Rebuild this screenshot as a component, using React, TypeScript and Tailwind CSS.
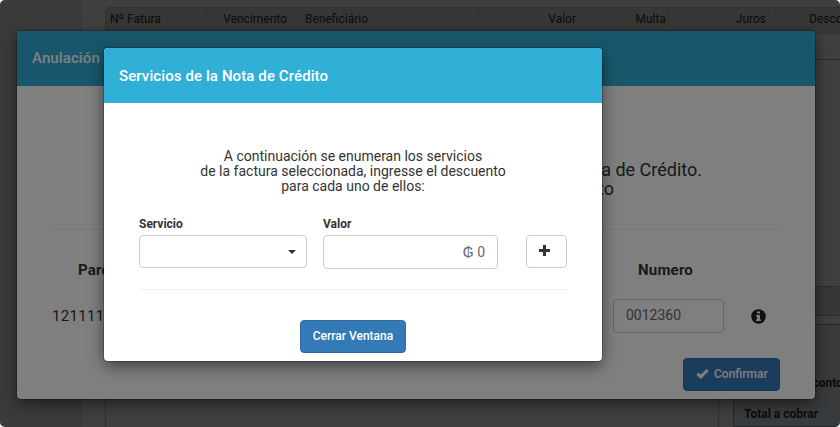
import React from "react";

const columns = [
  { label: "Nº Fatura", cls: "w-[101px] pl-1" },
  { label: "Vencimento", cls: "w-[95px] text-right pr-[14px]" },
  { label: "Beneficiário", cls: "w-[177px] pl-[3px]" },
  { label: "Valor", cls: "w-[100px] text-right pr-[2px]" },
  { label: "Multa", cls: "w-[90px] text-right pr-[2px]" },
  { label: "Juros", cls: "w-[100px] text-right pr-[2px]" },
  { label: "Desconto", cls: "w-[100px] pl-10" },
];

function BillingPage() {
  return (
    <div className="flex h-full w-full bg-white text-[#333]">
      <aside className="w-[81px] shrink-0 border-r border-[#e0e0e0] bg-[#ececec]" />
      <main className="flex min-w-0 grow flex-col pl-6 pt-[7px]">
        <div className="flex h-[27px] w-[763px] shrink-0 rounded-tl border border-[#c8c8c8] bg-[#dcdcdc]">
          {columns.map((c) => (
            <div
              key={c.label}
              className={`h-full shrink-0 border-r border-[#cacaca] text-[12px] leading-[22px] ${c.cls}`}
            >
              {c.label}
            </div>
          ))}
        </div>
        <div className="h-[26px] shrink-0 border-b border-[#b4b4b4]" />
        <div className="flex min-h-0 grow">
          <div className="w-[614px] shrink-0 border-x border-[#c0c0c0]" />
          <div className="ml-[14px] flex w-[160px] shrink-0 flex-col pt-[226px]">
            <div className="h-[30px] shrink-0 border border-[#b4b4b4] bg-[#dcdcdc]" />
            <div className="mt-[8px] grow border border-[#98a4b0] bg-[#e6eaf0] pl-[10px] pt-[50px] text-[12px] font-bold leading-4">
              <div className="pl-[48px]">Desconto</div>
              <div className="mt-[15px]">Total a cobrar</div>
            </div>
          </div>
        </div>
      </main>
    </div>
  );
}

function CancelDialog() {
  return (
    <section className="absolute left-[17px] top-[31px] flex h-[368px] w-[798px] flex-col overflow-hidden rounded bg-white text-[#333] shadow-[0_0_0_1px_rgba(0,0,0,0.2),0_5px_15px_rgba(0,0,0,0.5)]">
      <header className="h-[55px] shrink-0 bg-[#30afd7] pl-[15px] text-[15px] font-medium leading-[55px] tracking-[0.1px] text-white">
        Anulación de Factura
      </header>
      <div className="flex grow flex-col px-[35px]">
        <div className="h-[144px] shrink-0 border-b border-[#eee] pr-[78px] pt-[74px] text-[18px] leading-[19px]">
          <p className="text-right">Seleccione la Nota de Crédito.</p>
          <p className="pr-[88px] text-right">e ingrese el descuento</p>
        </div>
        <div className="flex grow justify-between">
          <div className="pt-[30px]">
            <div className="pl-[26px] text-[15px] font-bold leading-5 tracking-[0.2px]">Parcela</div>
            <div className="mt-[26px] text-[15px] leading-5 tracking-[0.3px]">121111</div>
          </div>
          <div className="w-[167px] pt-[30px]">
            <div className="pl-[25px] text-[15px] font-bold leading-5 tracking-[0.2px]">Numero</div>
            <div className="mt-[19px] flex items-center">
              <div className="h-[34px] w-[111px] rounded border border-[#ccc] pl-3 text-[14px] leading-[31px] text-[#666]">
                0012360
              </div>
              <svg className="ml-[27px] size-[15px]" viewBox="0 0 15 15">
                <circle cx="7.5" cy="7.5" r="7.3" fill="#222" />
                <path d="M6 2.5h3v2H6zM5 6h4v4.500h1V12H5v-1.500h1V7.500H5z" fill="#fff" />
              </svg>
            </div>
          </div>
        </div>
        <div className="mb-2 flex h-[33px] w-[97px] shrink-0 items-center self-end rounded border border-[#2e6da4] bg-[#337ab7] pb-0.5 pl-3 text-[12px] font-medium text-white">
          <svg className="mr-[5px] h-3 w-[13px] shrink-0" viewBox="0 0 13 12">
            <path d="M0.300 6.700 2.600 4.400 4.900 6.600 10.500 0.900 12.800 3.100 4.900 11.100z" fill="white" />
          </svg>
          Confirmar
        </div>
      </div>
    </section>
  );
}

function ServicesDialog() {
  return (
    <section className="absolute left-[104px] top-[48px] flex h-[313px] w-[498px] flex-col overflow-hidden rounded bg-white text-[#333] shadow-[0_0_0_1px_rgba(0,0,0,0.2),0_5px_15px_rgba(0,0,0,0.5)]">
      <header className="h-[55px] shrink-0 bg-[#30afd7] pl-[15px] pt-px text-[15px] font-medium leading-[55px] tracking-[0.1px] text-white">
        Servicios de la Nota de Crédito
      </header>
      <div className="flex grow flex-col px-[35px] pt-[46px]">
        <p className="text-center text-[14px] leading-[15px]">
          A continuación se enumeran los servicios
          <br />
          de la factura seleccionada, ingresse el descuento
          <br />
          para cada uno de ellos:
        </p>
        <div className="mt-[21px] flex items-end border-b border-[#eee] pb-5 text-[12px]">
          <div className="w-[168px]">
            <div className="h-[20px] font-bold leading-[18px]">Servicio</div>
            <div className="mb-px flex h-[33px] items-center justify-end rounded border border-[#ccc] pr-[10px]">
              <span className="border-x-4 border-t-4 border-x-transparent border-t-[#333]" />
            </div>
          </div>
          <div className="ml-4 w-[175px]">
            <div className="h-[20px] font-bold leading-[18px]">Valor</div>
            <div className="h-[34px] rounded border border-[#ccc] pr-3 text-right text-[14px] leading-8 text-[#666]">
              ₲ 0
            </div>
          </div>
          <div className="mb-px ml-7 flex h-[33px] w-[41px] items-center justify-center rounded border border-[#ccc]">
            <svg className="mr-1 mb-[3px] size-[11px]" viewBox="0 0 11 11">
              <path d="M4 0h3v4h4v3H7v4H4V7H0V4h4z" fill="#333" />
            </svg>
          </div>
        </div>
        <button className="mt-[30px] h-[33px] w-[106px] self-center rounded border border-[#2e6da4] bg-[#337ab7] pb-0.5 text-[12px] font-medium text-white">
          Cerrar Ventana
        </button>
      </div>
    </section>
  );
}

export default function App() {
  return (
    <div className="h-[427px] w-[840px] bg-white">
      <div className="relative h-full w-full overflow-hidden rounded-[5px] font-['Roboto',sans-serif]">
        <BillingPage />
        <div className="absolute inset-0 bg-black/50" />
        <CancelDialog />
        <div className="absolute inset-0 bg-black/50" />
        <ServicesDialog />
      </div>
    </div>
  );
}
